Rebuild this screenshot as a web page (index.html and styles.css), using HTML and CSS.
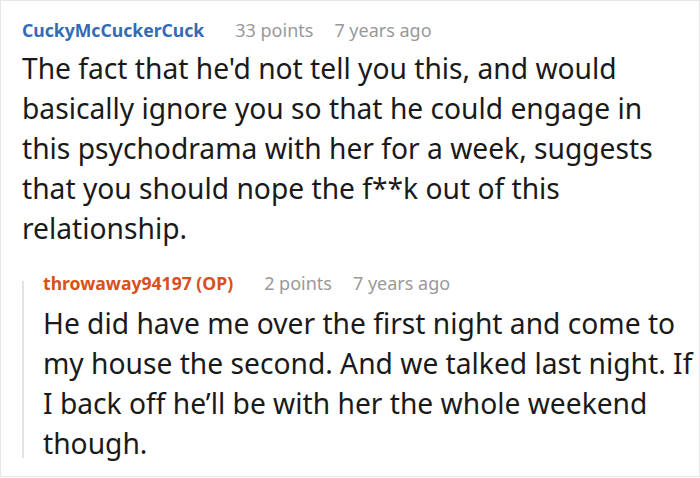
FILE: index.html
```html
<!DOCTYPE html>
<html lang="en">
<head>
  <meta charset="UTF-8">
  <meta name="viewport" content="width=device-width, initial-scale=1.0">
  <title>Comment thread</title>
  <link rel="stylesheet" href="styles.css">
</head>
<body>
  <div class="thread">
    <div class="comment">
      <div class="comment-meta">
        <span class="author">CuckyMcCuckerCuck</span>
        <span class="score">33 points</span>
        <span class="time">7 years ago</span>
      </div>
      <p class="comment-body">The fact that he'd not tell you this, and would basically ignore you so that he could engage in this psychodrama with her for a week, suggests that you should nope the f**k out of this relationship.</p>

      <div class="comment reply">
        <div class="comment-meta">
          <span class="author op">throwaway94197 (OP)</span>
          <span class="score">2 points</span>
          <span class="time">7 years ago</span>
        </div>
        <p class="comment-body">He did have me over the first night and come to my house the second. And we talked last night. If I back off he’ll be with her the whole weekend though.</p>
      </div>
    </div>
  </div>
</body>
</html>
```

FILE: styles.css
```css
body {
  margin: 0;
  background-color: #fff;
  font-family: "Noto Sans", "Open Sans", sans-serif;
}
.thread {
  height: 477px;
  box-sizing: border-box;
  border: 1px solid #e6e6e6;
  padding: 17px 1px 0 21px;
}
.comment-meta {
  display: flex;
  align-items: baseline;
  font-size: 18px;
  line-height: 24px;
}
.author {
  font-size: 17.6px;
  font-weight: bold;
  color: #336bb5;
  margin-right: 31px;
}
.author.op {
  color: #d8501d;
}
.score {
  margin-right: 21px;
}
.score, .time {
  color: #999;
}
.comment-body {
  margin: 6px 0 0;
  font-size: 28.2px;
  line-height: 40px;
  color: #1a1a1a;
}
.thread > .comment > .comment-body {
  margin-right: 10px;
}
/* thread line on the left of a reply, a bit shorter than the reply itself */
.reply {
  margin-top: 25px;
  padding-left: 21px;
  background: linear-gradient(#e3e3e3, #e3e3e3) no-repeat 0 8px / 2px calc(100% - 13px);
}
.reply .comment-meta {
  line-height: 20px;
}
.reply .comment-body {
  margin-top: 10px;
}
```
